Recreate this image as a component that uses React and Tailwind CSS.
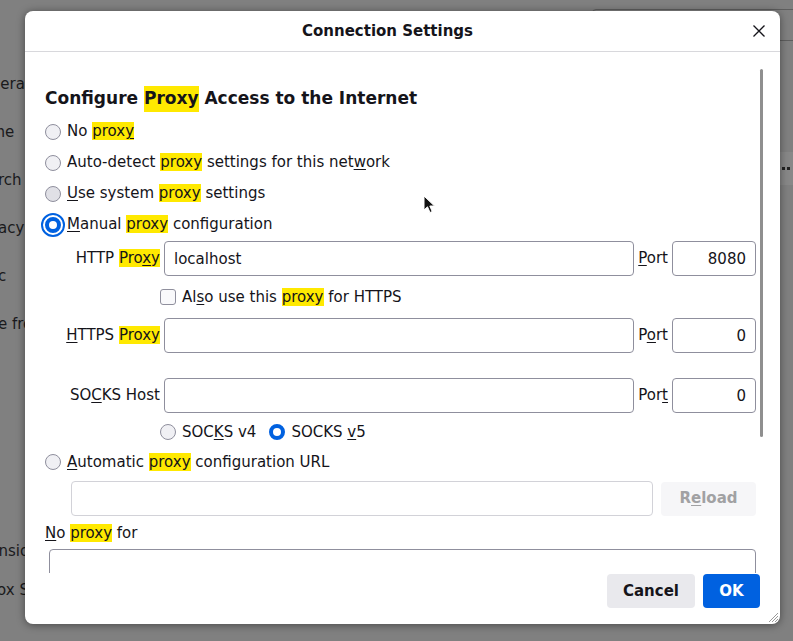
import React from "react";

const H = ({ children }) => <span className="bg-[#ffe900]">{children}</span>;
const U = ({ children }) => (
  <span className="underline decoration-1 underline-offset-[2px]">{children}</span>
);

function Radio({ checked = false, focus = false, hover = false }) {
  if (checked) {
    return (
      <span
        className={
          focus
            ? "w-4 h-4 shrink-0 rounded-full border-[4px] border-[#0061e0] bg-white outline-2 outline-[#0061e0] outline-offset-2"
            : "w-4 h-4 shrink-0 rounded-full border-[4px] border-[#0061e0] bg-white"
        }
      />
    );
  }
  return (
    <span
      className={
        hover
          ? "w-4 h-4 shrink-0 rounded-full border border-[#8f8f9d] bg-[#e0e0e6]"
          : "w-4 h-4 shrink-0 rounded-full border border-[#8f8f9d] bg-[#f0f0f4]"
      }
    />
  );
}

function RadioRow({ children, ...props }) {
  return (
    <div className="h-[31px] flex items-center gap-[6px]">
      <Radio {...props} />
      <span>{children}</span>
    </div>
  );
}

function FieldRow({ label, port, value = "", portValue }) {
  return (
    <div className="h-[35px] flex items-center gap-[4px]">
      <div className="w-[115px] shrink-0 text-right whitespace-nowrap">{label}</div>
      <input
        readOnly
        value={value}
        className="h-full min-w-0 flex-1 border border-[#8f8f9d] rounded-[4px] px-[9px] bg-white outline-none"
      />
      <span className="whitespace-nowrap">{port}</span>
      <input
        readOnly
        value={portValue}
        className="h-full w-[84px] shrink-0 border border-[#8f8f9d] rounded-[4px] pr-[9px] text-right bg-white outline-none"
      />
    </div>
  );
}

function Sidebar() {
  const top = ["General", "Home", "Search", "Privacy & Security", "Sync", "More from Mozilla"];
  const bottom = ["Extensions & Themes", "Firefox Support"];
  return (
    <div className="ml-[-30px] w-[220px] shrink-0 h-full flex flex-col pt-[60px] pb-[31px] text-[15px] text-[#1a1a1c]">
      {top.map((t) => (
        <div key={t} className="h-[48px] shrink-0 flex items-center whitespace-nowrap">
          {t}
        </div>
      ))}
      <div className="flex-1" />
      {bottom.map((t) => (
        <div key={t} className="h-[39px] shrink-0 ml-[-5px] flex items-center whitespace-nowrap">
          {t}
        </div>
      ))}
    </div>
  );
}

function Dialog() {
  return (
    <div className="absolute left-[25px] top-[11px] w-[755px] h-[613px] bg-white rounded-[8px] shadow-[0_1px_8px_rgba(0,0,0,0.45)] flex flex-col overflow-hidden text-[15px] text-[#15141a]">
      {/* title bar */}
      <div className="h-[41px] shrink-0 border-b border-[#d8d8dc] flex items-center justify-center pr-[30px] relative">
        <span className="font-bold">Connection Settings</span>
        <svg
          className="absolute right-[15px] top-[14px]"
          width="12"
          height="12"
          viewBox="0 0 12 12"
        >
          <path d="M0.5 0.5 L11.5 11.5 M11.5 0.5 L0.5 11.5" stroke="#15141a" strokeWidth="1.3" />
        </svg>
      </div>

      {/* scrolling content */}
      <div className="h-[521px] shrink-0 overflow-hidden pl-[20px] pr-[24px] pt-[35px]">
        <div className="h-[24px] flex items-center text-[17px] font-bold whitespace-nowrap">
          Configure&nbsp;<H>Proxy</H>&nbsp;Access to the Internet
        </div>
        <div className="mt-[5px]">
          <RadioRow>
            No <H>prox<U>y</U></H>
          </RadioRow>
          <RadioRow>
            Auto-detect <H>proxy</H> settings for this net<U>w</U>ork
          </RadioRow>
          <RadioRow hover>
            <U>U</U>se system <H>proxy</H> settings
          </RadioRow>
          <RadioRow checked focus>
            <U>M</U>anual <H>proxy</H> configuration
          </RadioRow>
        </div>

        <div className="mt-[1px]">
          <FieldRow
            label={
              <>
                HTTP <H>Pro<U>x</U>y</H>
              </>
            }
            value="localhost"
            port={
              <>
                <U>P</U>ort
              </>
            }
            portValue="8080"
          />
        </div>

        <div className="h-[42px] flex items-center pl-[115px] gap-[6px]">
          <span className="w-4 h-4 shrink-0 border border-[#8f8f9d] rounded-[3px] bg-[#f9f9fb]" />
          <span>
            Al<U>s</U>o use this <H>proxy</H> for HTTPS
          </span>
        </div>

        <FieldRow
          label={
            <>
              <U>H</U>TTPS <H>Proxy</H>
            </>
          }
          port={
            <>
              P<U>o</U>rt
            </>
          }
          portValue="0"
        />

        <div className="h-[25px]" />

        <FieldRow
          label={
            <>
              SO<U>C</U>KS Host
            </>
          }
          port={
            <>
              Por<U>t</U>
            </>
          }
          portValue="0"
        />

        <div className="h-[38px] flex items-center pl-[115px]">
          <Radio />
          <span className="ml-[6px]">
            SOC<U>K</U>S v4
          </span>
          <span className="ml-[13px] flex">
            <Radio checked />
          </span>
          <span className="ml-[6px]">
            SOCKS <U>v</U>5
          </span>
        </div>

        <div className="h-[22px] flex items-center gap-[6px]">
          <Radio />
          <span>
            <U>A</U>utomatic <H>proxy</H> configuration URL
          </span>
        </div>

        <div className="mt-[8px] h-[35px] flex items-center pl-[26px] gap-[8px]">
          <input
            readOnly
            value=""
            className="h-full min-w-0 flex-1 border border-[#d2d2d8] rounded-[4px] bg-white outline-none"
          />
          <button className="w-[95px] h-[34px] shrink-0 rounded-[4px] bg-[#f6f6f8] text-[#a1a1a3] font-bold">
            R<U>e</U>load
          </button>
        </div>

        <div className="mt-[7px] h-[20px] flex items-center">
          <span>
            <U>N</U>o <H>proxy</H> for
          </span>
        </div>

        <div className="mt-[6px] ml-[4px] h-[70px] border border-[#8f8f9d] rounded-[4px]" />
      </div>

      {/* footer */}
      <div className="h-[51px] shrink-0 flex justify-end items-start pt-[1px] pr-[20px] gap-[8px]">
        <button className="h-[34px] px-[16px] rounded-[4px] bg-[#e9e9ed] font-bold text-[#15141a]">
          Cancel
        </button>
        <button className="h-[34px] w-[57px] rounded-[4px] bg-[#0061e0] font-bold text-white">
          OK
        </button>
      </div>

      {/* scrollbar thumb */}
      <div className="absolute left-[735px] top-[58px] w-[3px] h-[368px] rounded-full bg-[#8f8f8f]" />

      {/* resize grip */}
      <svg className="absolute right-[2px] bottom-[2px]" width="9" height="9" viewBox="0 0 9 9">
        <path d="M9 0 L0 9 M9 3 L3 9 M9 6 L6 9" stroke="#9a9a9a" strokeWidth="1" />
      </svg>
    </div>
  );
}

export default function App() {
  return (
    <div className="relative w-[793px] h-[641px] overflow-hidden bg-[#808080] font-['DejaVu_Sans',sans-serif]">
      <div className="flex h-full">
        <Sidebar />
        <div className="flex-1 flex flex-col items-end">
          <div className="mt-[9px] mr-[-20px] w-[221px] h-[32px] border border-[#5e5e5e] rounded-[4px]" />
          <div className="mt-[111px] w-[13px] h-[33px] bg-[#888888] flex items-center pl-[2px] gap-[2px]">
            <span className="w-[3px] h-[3px] bg-[#222]" />
            <span className="w-[3px] h-[3px] bg-[#222]" />
          </div>
        </div>
      </div>

      <Dialog />

      {/* mouse pointer */}
      <svg className="absolute left-[423px] top-[195px]" width="13" height="19" viewBox="0 0 13 19">
        <path
          d="M1 1 L1 15 L4.5 11.8 L7 17.5 L9.2 16.5 L6.8 11 L11.5 11 Z"
          fill="#111"
          stroke="#fff"
          strokeWidth="1"
          strokeLinejoin="round"
        />
      </svg>
    </div>
  );
}
